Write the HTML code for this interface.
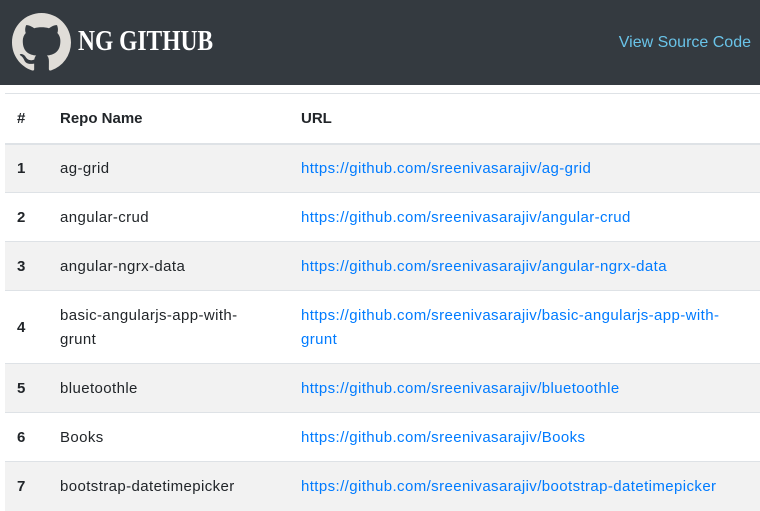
<!DOCTYPE html>
<html><head><meta charset="utf-8"><style>
*{box-sizing:border-box}
body{margin:0;width:760px;height:491px;overflow:hidden;background:#fff;font-family:"Liberation Sans",sans-serif;color:#212529;font-size:15px}
.nav{height:85px;background:#343a40;position:relative}
.logo{position:absolute;left:12px;top:13px}
.brand{position:absolute;left:78px;top:25px;color:#fff;font-family:"Liberation Serif",serif;font-weight:bold;font-size:29px;transform:scaleX(0.81);transform-origin:left}
.src{position:absolute;right:9px;top:34px;font-size:16px;color:#69c3e8}
table{position:absolute;left:5px;top:93px;width:755px;border-collapse:collapse;table-layout:fixed}
td,th{text-align:left;vertical-align:middle;padding:2px 12px 0;line-height:24px;white-space:nowrap}
td{letter-spacing:0.4px}
th{height:50px;border-top:1px solid #dee2e6;border-bottom:2px solid #dee2e6;font-weight:bold}
td{height:49px;border-top:1px solid #dee2e6}
tr.s td{background:#f2f2f2}
td:first-child{font-weight:bold}
a{color:#007bff;text-decoration:none}
</style></head><body>
<div class="nav">
<svg class="logo" width="59" height="59" viewBox="0 0 16 16"><path fill="#e0ddd8" d="M8 0C3.58 0 0 3.58 0 8c0 3.54 2.29 6.53 5.47 7.590.4.07.55-.17.55-.38 0-.19-.01-.82-.01-1.49-2.01.37-2.53-.49-2.690-.94-.09-.23-.48-.94-.82-1.13-.28-.15-.68-.52-.01-.53.63-.01 1.08.58 1.230.82.72 1.21 1.87.87 2.33.66.07-.52.28-.87.51-1.07-1.78-.2-3.64-.89-3.64-3.95 0-.87.31-1.59.82-2.150-.08-.2-.36-1.02.08-2.12 0 0 .67-.21 2.2.82.64-.18 1.32-.27 2-.27.68 0 1.36.09 2 .27 1.53-1.04 2.2-.82 2.2-.82.44 1.1.16 1.92.08 2.12.51.56.82 1.27.82 2.15 0 3.07-1.87 3.75-3.65 3.95.29.25.54.73.54 1.48 0 1.07-.01 1.93-.01 2.2 0 .21.15.46.55.38A8.013 8.013 0 0016 8c0-4.42-3.58-8-8-8z"/></svg>
<div class="brand">NG GITHUB</div>
<div class="src">View Source Code</div>
</div>
<table>
<colgroup><col style="width:43px"><col style="width:241px"><col></colgroup>
<tr><th>#</th><th>Repo Name</th><th>URL</th></tr>
<tr class="s"><td>1</td><td>ag-grid</td><td><a>https://github.com/sreenivasarajiv/ag-grid</a></td></tr>
<tr><td>2</td><td>angular-crud</td><td><a>https://github.com/sreenivasarajiv/angular-crud</a></td></tr>
<tr class="s"><td>3</td><td>angular-ngrx-data</td><td><a>https://github.com/sreenivasarajiv/angular-ngrx-data</a></td></tr>
<tr><td style="height:73px">4</td><td>basic-angularjs-app-with-<br>grunt</td><td><a>https://github.com/sreenivasarajiv/basic-angularjs-app-with-<br>grunt</a></td></tr>
<tr class="s"><td>5</td><td>bluetoothle</td><td><a>https://github.com/sreenivasarajiv/bluetoothle</a></td></tr>
<tr><td>6</td><td>Books</td><td><a>https://github.com/sreenivasarajiv/Books</a></td></tr>
<tr class="s"><td>7</td><td>bootstrap-datetimepicker</td><td><a>https://github.com/sreenivasarajiv/bootstrap-datetimepicker</a></td></tr>
</table>
</body></html>
